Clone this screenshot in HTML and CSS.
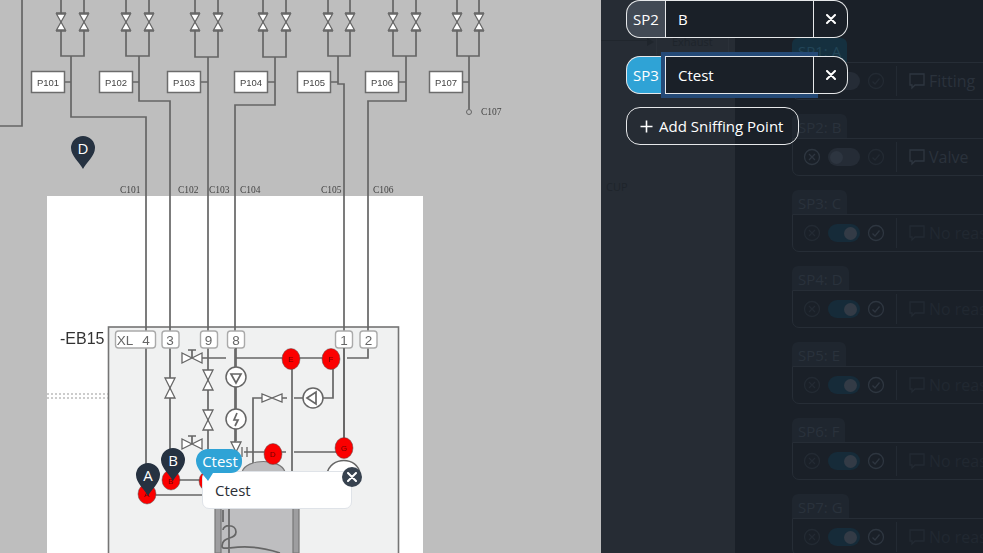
FILE: index.html
```html
<!DOCTYPE html>
<html lang="en">
<head>
<meta charset="utf-8">
<title>Sniffing points</title>
<link rel="stylesheet" href="styles.css">
</head>
<body>
<div class="screen">
  <main class="canvas">
    <svg class="diagram" width="601" height="553" viewBox="0 0 601 553">
      <defs>
        <filter id="soft" x="0" y="0" width="100%" height="100%"><feGaussianBlur stdDeviation="0.7"/></filter>
        <g id="valve"><path class="v" d="M-4.500 -8H4.500L-4.500 8H4.500Z"/><path class="ln" d="M-5 -9H5M-5 9H5"/></g>
        <g id="vvalve"><path class="v" d="M-5 -10H5L-5 10H5Z"/></g>
        <g id="hvalve"><path class="v" d="M-10 -5V5L10 -5V5Z"/><path class="ln" d="M0 0V-8M-4 -8H4"/></g>
      </defs>
      <g filter="url(#soft)">
        <rect class="sheet" x="47" y="196" width="376" height="357"/>
        <rect class="unit" x="108.500" y="327" width="290" height="230"/>
        <path class="dash" d="M47 394H108M47 398H108"/>
        <path class="ln" d="M22 0V126H0"/>
        <g class="pipes">
          <path d="M61 0V56H84V0M71 56V117H146V496"/>
          <path d="M126 0V56H149V0M139 56V101H170V480"/>
          <path d="M195 0V57H218V0M208 57V480"/>
          <path d="M263 0V57H286V0M275 57V105H235V450"/>
          <path d="M328 0V56H350V0M338 56V84H344V445"/>
          <path d="M393 0V56H416V0M406 56V101H368V358H347"/>
          <path d="M457 0V56H479V0M469 56V109"/>
          <path d="M65 82H71M132 82H139M200 82H208M268 82H275M331 82H338M399 82H406M463 82H469"/>
        </g>
        <circle class="port" cx="469" cy="112" r="2.500"/>
        <use href="#valve" x="61" y="22"/><use href="#valve" x="84" y="22"/>
        <use href="#valve" x="126" y="22"/><use href="#valve" x="149" y="22"/>
        <use href="#valve" x="195" y="22"/><use href="#valve" x="218" y="22"/>
        <use href="#valve" x="263" y="22"/><use href="#valve" x="286" y="22"/>
        <use href="#valve" x="328" y="22"/><use href="#valve" x="350" y="22"/>
        <use href="#valve" x="393" y="22"/><use href="#valve" x="416" y="22"/>
        <use href="#valve" x="457" y="22"/><use href="#valve" x="479" y="22"/>
        <g class="pbox">
          <rect x="31.500" y="71.500" width="33" height="21"/><rect x="99.500" y="71.500" width="33" height="21"/>
          <rect x="167.500" y="71.500" width="33" height="21"/><rect x="234.500" y="71.500" width="33" height="21"/>
          <rect x="297.500" y="71.500" width="33" height="21"/><rect x="365.500" y="71.500" width="33" height="21"/>
          <rect x="429.500" y="71.500" width="33" height="21"/>
        </g>
        <g class="plabel">
          <text x="48" y="85.500">P101</text><text x="116" y="85.500">P102</text><text x="184" y="85.500">P103</text>
          <text x="251" y="85.500">P104</text><text x="314" y="85.500">P105</text><text x="382" y="85.500">P106</text>
          <text x="446" y="85.500">P107</text>
        </g>
        <g class="clabel">
          <text x="120" y="193">C101</text><text x="178" y="193">C102</text><text x="209" y="193">C103</text>
          <text x="240" y="193">C104</text><text x="321" y="193">C105</text><text x="373" y="193">C106</text>
          <text x="481" y="115">C107</text>
        </g>
        <text class="eb" x="60" y="344">-EB15</text>
        <g class="tag">
          <rect x="115.500" y="331" width="40" height="17"/><rect x="162" y="331" width="17" height="17"/>
          <rect x="200.500" y="331" width="17" height="17"/><rect x="227.500" y="331" width="17" height="17"/>
          <rect x="335.500" y="331" width="17" height="17"/><rect x="360" y="331" width="17" height="17"/>
        </g>
        <g class="tagtext">
          <text x="125" y="345">XL</text><text x="146" y="345">4</text><text x="170" y="345">3</text>
          <text x="208.500" y="345">9</text><text x="236" y="345">8</text><text x="344" y="345">1</text><text x="368.500" y="345">2</text>
        </g>
        <g class="pipes">
          <path d="M200 358H226M236 358H330M333 360V398H322M292 358V553M344 348V452"/>
          <path d="M253 470V398H262M282 398H287M294 398H304"/>
          <path d="M236 348V367M236 387V409M236 429V441"/>
          <path d="M244 452H286M294 452H344"/>
          <path d="M146 495H215M170 480H205"/>
        </g>
        <use href="#vvalve" x="170" y="388"/><use href="#vvalve" x="208" y="380"/><use href="#vvalve" x="208" y="420"/>
        <use href="#hvalve" x="192" y="358"/><use href="#hvalve" x="192" y="444"/>
        <path class="v" d="M262 394V402L282 394V402Z"/>
        <g class="disc">
          <circle cx="236" cy="377" r="10"/><circle cx="236" cy="419" r="10"/><circle cx="313" cy="398" r="10"/>
        </g>
        <path class="ln" d="M231 374H241L236 383ZM237 413L234 420H238L235 426M307 398L316 392V404Z"/>
        <path class="v" d="M231 442H241L236 452ZM242 447V457M247 447V457"/>
        <path class="dome" d="M242 472C246 458 281 458 285 472Z"/>
        <path class="tank" d="M215 553V505H299V553Z"/>
        <path class="tankin" d="M221 553V505H293V553"/>
        <path class="ln" d="M229 505V553M223 510V522M223 530C223 524 236 524 236 532C236 540 222 536 222 546C222 553 240 540 280 553"/>
        <path class="disc" d="M327 474C330 456 358 456 360 474Z"/>
        <g class="red">
          <ellipse cx="147" cy="494" rx="9" ry="10"/><ellipse cx="171" cy="480" rx="9" ry="10"/><ellipse cx="208" cy="481" rx="9" ry="10"/>
          <ellipse cx="273" cy="454" rx="9" ry="10.500"/><ellipse cx="291" cy="359" rx="9" ry="10.500"/>
          <ellipse cx="331" cy="359" rx="9" ry="10.500"/><ellipse cx="344" cy="448" rx="9" ry="10.500"/>
        </g>
        <g class="redtext">
          <text x="147" y="497">A</text><text x="171" y="484">B</text><text x="291" y="362">E</text>
          <text x="331" y="362">F</text><text x="273" y="457">D</text><text x="344" y="451">G</text>
        </g>
      </g>
    </svg>

    <div class="pin pin-d">D</div>
    <div class="pin pin-a">A</div>
    <div class="pin pin-b">B</div>

    <div class="note">
      <span class="note-text">Ctest</span>
      <button class="note-close" type="button">
        <svg width="10" height="10" viewBox="0 0 10 10"><path d="M1 1L9 9M9 1L1 9"/></svg>
      </button>
    </div>
    <div class="pin pin-active">Ctest</div>
  </main>

  <aside class="panel">
    <div class="bg-list">
      <div class="bg-side">
        <div class="bg-rule"></div>
        <div class="bg-arrow"></div>
        <div class="bg-exhaust">Exhaust</div>
        <div class="bg-cup">CUP</div>
      </div>
      <div class="bg-main">
        <div class="bg-item">
          <div class="bg-tab bg-tab-on">SP1: A</div>
          <div class="bg-row">
            <svg class="bg-ic" viewBox="0 0 18 18"><circle cx="9" cy="9" r="7.500"/><path d="M6 6L12 12M12 6L6 12"/></svg>
            <span class="bg-toggle"><i></i></span>
            <svg class="bg-ic bg-dim" viewBox="0 0 18 18"><circle cx="9" cy="9" r="7.500"/><path d="M5.500 9.500L8 12L12.500 6.500"/></svg>
            <span class="bg-div"></span>
            <svg class="bg-ic" viewBox="0 0 18 18"><path d="M2 2H16V13H7L4 16V13H2Z"/></svg>
            <span class="bg-reason">Fitting</span>
          </div>
        </div>
        <div class="bg-item">
          <div class="bg-tab">SP2: B</div>
          <div class="bg-row">
            <svg class="bg-ic" viewBox="0 0 18 18"><circle cx="9" cy="9" r="7.500"/><path d="M6 6L12 12M12 6L6 12"/></svg>
            <span class="bg-toggle"><i></i></span>
            <svg class="bg-ic bg-dim" viewBox="0 0 18 18"><circle cx="9" cy="9" r="7.500"/><path d="M5.500 9.500L8 12L12.500 6.500"/></svg>
            <span class="bg-div"></span>
            <svg class="bg-ic" viewBox="0 0 18 18"><path d="M2 2H16V13H7L4 16V13H2Z"/></svg>
            <span class="bg-reason">Valve</span>
          </div>
        </div>
        <div class="bg-item">
          <div class="bg-tab">SP3: C</div>
          <div class="bg-row">
            <svg class="bg-ic bg-dim" viewBox="0 0 18 18"><circle cx="9" cy="9" r="7.500"/><path d="M6 6L12 12M12 6L6 12"/></svg>
            <span class="bg-toggle bg-toggle-on"><i></i></span>
            <svg class="bg-ic" viewBox="0 0 18 18"><circle cx="9" cy="9" r="7.500"/><path d="M5.500 9.500L8 12L12.500 6.500"/></svg>
            <span class="bg-div"></span>
            <svg class="bg-ic bg-dim" viewBox="0 0 18 18"><path d="M2 2H16V13H7L4 16V13H2Z"/></svg>
            <span class="bg-reason bg-dim-text">No reason</span>
          </div>
        </div>
        <div class="bg-item">
          <div class="bg-tab">SP4: D</div>
          <div class="bg-row">
            <svg class="bg-ic bg-dim" viewBox="0 0 18 18"><circle cx="9" cy="9" r="7.500"/><path d="M6 6L12 12M12 6L6 12"/></svg>
            <span class="bg-toggle bg-toggle-on"><i></i></span>
            <svg class="bg-ic" viewBox="0 0 18 18"><circle cx="9" cy="9" r="7.500"/><path d="M5.500 9.500L8 12L12.500 6.500"/></svg>
            <span class="bg-div"></span>
            <svg class="bg-ic bg-dim" viewBox="0 0 18 18"><path d="M2 2H16V13H7L4 16V13H2Z"/></svg>
            <span class="bg-reason bg-dim-text">No reason</span>
          </div>
        </div>
        <div class="bg-item">
          <div class="bg-tab">SP5: E</div>
          <div class="bg-row">
            <svg class="bg-ic bg-dim" viewBox="0 0 18 18"><circle cx="9" cy="9" r="7.500"/><path d="M6 6L12 12M12 6L6 12"/></svg>
            <span class="bg-toggle bg-toggle-on"><i></i></span>
            <svg class="bg-ic" viewBox="0 0 18 18"><circle cx="9" cy="9" r="7.500"/><path d="M5.500 9.500L8 12L12.500 6.500"/></svg>
            <span class="bg-div"></span>
            <svg class="bg-ic bg-dim" viewBox="0 0 18 18"><path d="M2 2H16V13H7L4 16V13H2Z"/></svg>
            <span class="bg-reason bg-dim-text">No reason</span>
          </div>
        </div>
        <div class="bg-item">
          <div class="bg-tab">SP6: F</div>
          <div class="bg-row">
            <svg class="bg-ic bg-dim" viewBox="0 0 18 18"><circle cx="9" cy="9" r="7.500"/><path d="M6 6L12 12M12 6L6 12"/></svg>
            <span class="bg-toggle bg-toggle-on"><i></i></span>
            <svg class="bg-ic" viewBox="0 0 18 18"><circle cx="9" cy="9" r="7.500"/><path d="M5.500 9.500L8 12L12.500 6.500"/></svg>
            <span class="bg-div"></span>
            <svg class="bg-ic bg-dim" viewBox="0 0 18 18"><path d="M2 2H16V13H7L4 16V13H2Z"/></svg>
            <span class="bg-reason bg-dim-text">No reason</span>
          </div>
        </div>
        <div class="bg-item">
          <div class="bg-tab">SP7: G</div>
          <div class="bg-row">
            <svg class="bg-ic bg-dim" viewBox="0 0 18 18"><circle cx="9" cy="9" r="7.500"/><path d="M6 6L12 12M12 6L6 12"/></svg>
            <span class="bg-toggle bg-toggle-on"><i></i></span>
            <svg class="bg-ic" viewBox="0 0 18 18"><circle cx="9" cy="9" r="7.500"/><path d="M5.500 9.500L8 12L12.500 6.500"/></svg>
            <span class="bg-div"></span>
            <svg class="bg-ic bg-dim" viewBox="0 0 18 18"><path d="M2 2H16V13H7L4 16V13H2Z"/></svg>
            <span class="bg-reason bg-dim-text">No reason</span>
          </div>
        </div>
      </div>
    </div>

    <div class="editor">
      <div class="sp-field">
        <span class="sp-label">SP2</span>
        <span class="sp-input">B</span>
        <button class="sp-close" type="button"><svg width="10" height="10" viewBox="0 0 10 10"><path d="M1 1L9 9M9 1L1 9"/></svg></button>
      </div>
      <div class="sp-field sp-field-active">
        <span class="sp-label">SP3</span>
        <span class="sp-input">Ctest</span>
        <button class="sp-close" type="button"><svg width="10" height="10" viewBox="0 0 10 10"><path d="M1 1L9 9M9 1L1 9"/></svg></button>
      </div>
      <button class="add-btn" type="button">
        <svg width="13" height="13" viewBox="0 0 13 13"><path d="M6.500 0.500V12.500M0.500 6.500H12.500"/></svg>
        <span>Add Sniffing Point</span>
      </button>
    </div>
  </aside>
</div>
</body>
</html>
```

FILE: styles.css
```css
* { box-sizing: border-box; }
html, body { margin: 0; height: 100%; overflow: hidden; }
body { font-family: "Open Sans", sans-serif; background: #1a2028; }
.screen { display: flex; width: 983px; height: 553px; overflow: hidden; }

/* diagram canvas */
.canvas { position: relative; width: 601px; height: 553px; background: #bebebe; flex: none; overflow: hidden; }
.diagram { display: block; }
.sheet { fill: #fff; }
.unit { fill: #f0f1f1; stroke: #747474; stroke-width: 1.600; }
.dash { fill: none; stroke: #999; stroke-width: 1.200; stroke-dasharray: 2 2; }
.pipes path, .ln { fill: none; stroke: #666; stroke-width: 1.700; }
.v { fill: #fff; stroke: #666; stroke-width: 1.300; }
.port { fill: none; stroke: #666; }
.pbox rect { fill: #fff; stroke: #6c6c6c; stroke-width: 1.500; }
.plabel text { font: 9.500px "Liberation Sans", sans-serif; fill: #444; text-anchor: middle; }
.clabel text { font: 9.500px "Liberation Serif", serif; fill: #444; text-anchor: start; }
.eb { font: 16px "Liberation Sans", sans-serif; fill: #333; }
.tag rect { fill: #fff; stroke: #aaa; stroke-width: 1.400; rx: 3px; }
.tagtext text { font: 13.500px "Liberation Sans", sans-serif; fill: #666; text-anchor: middle; }
.disc circle, path.disc { fill: #fff; stroke: #666; stroke-width: 1.500; }
.dome { fill: #bcbcbe; stroke: #777; stroke-width: 1.200; }
.tank { fill: #9e9ea0; stroke: #777; stroke-width: 1.200; }
.tankin { fill: #bebec0; stroke: #777; stroke-width: 1.200; }
.red ellipse { fill: #fb0000; stroke: #555; stroke-width: 0.500; }
.redtext text { font: 8px "Liberation Sans", sans-serif; fill: #6a0000; text-anchor: middle; }

/* pins */
.pin {
  position: absolute; width: 24px; height: 33px; padding-bottom: 9px;
  display: flex; align-items: center; justify-content: center;
  color: #fff; font-size: 15px; line-height: 1;
  background: #263241;
  clip-path: path("M12 0A12 12 0 0 1 24 12C24 20 15 27 12 33C9 27 0 20 0 12A12 12 0 0 1 12 0Z");
}
.pin-d { left: 71px; top: 136px; }
.pin-a { left: 136px; top: 463px; }
.pin-b { left: 161px; top: 448px; }
.pin-active {
  left: 196px; top: 449px; width: 46px; height: 33px; background: #2fa3d6; padding-left: 2px;
  clip-path: path("M12 0H35A11 11 0 0 1 46 11V13A11 11 0 0 1 35 24H17L12 32C9 27 0 20 0 12A12 12 0 0 1 12 0Z");
}

/* note popup */
.note {
  position: absolute; left: 202px; top: 471px; width: 150px; height: 38px;
  background: #fff; border: 1px solid #dfe3e8; border-radius: 7px;
  display: flex; align-items: center; padding-left: 12px;
}
.note-text { font-size: 15px; color: #2b2f36; }
.note-close {
  position: absolute; left: 139px; top: -5px; width: 20px; height: 20px; padding: 0;
  border: 0; border-radius: 50%; background: #37424f;
  display: flex; align-items: center; justify-content: center;
}
.note-close path, .sp-close path { fill: none; stroke: #fff; stroke-width: 2; stroke-linecap: round; }

/* right panel */
.panel { position: relative; flex: 1; height: 553px; overflow: hidden; background: #1a2028; }
.bg-list { display: flex; height: 100%; }
.bg-side { width: 134px; height: 100%; background: #262c34; position: relative; flex: none; }
.bg-rule { position: absolute; left: 0; top: 40px; width: 48px; height: 1px; background: #20262d; }
.bg-arrow {
  position: absolute; left: 46px; top: 38px; width: 0; height: 0;
  border-top: 4px solid transparent; border-bottom: 4px solid transparent; border-left: 7px solid #1f252c;
}
.bg-exhaust {
  position: absolute; left: 55px; top: 27px; width: 73px; height: 28px;
  border: 1px solid #2b3139; border-bottom: 0; font-size: 11px; color: #1e242b; padding: 6px 0 0 15px;
}
.bg-cup { position: absolute; left: 5px; top: 179px; font-size: 11px; color: #1e242b; }
.bg-main { flex: 1; padding: 38px 0 0 57px; }
.bg-item { height: 76px; }
.bg-tab {
  display: inline-block; height: 24px; padding: 0 6px; background: #1f262f;
  border-radius: 6px 6px 0 0; font-size: 15px; line-height: 26px; color: #2a323c; vertical-align: top;
}
.bg-tab-on { background: #15303f; color: #224557; }
.bg-row {
  display: flex; align-items: center; width: 300px; height: 38px; padding-left: 10px;
  border: 1px solid #262d36; border-radius: 0 0 0 7px;
}
.bg-ic { width: 18px; height: 18px; flex: none; fill: none; stroke: #2e3640; stroke-width: 1.300; }
.bg-dim { stroke: #232a33; }
.bg-toggle { display: flex; align-items: center; width: 32px; height: 18px; margin: 0 7px; padding: 0 2px; border-radius: 9px; background: #252c36; flex: none; }
.bg-toggle i { width: 13px; height: 13px; border-radius: 50%; background: #2d3540; }
.bg-toggle-on { background: #162b39; justify-content: flex-end; padding-right: 3px; }
.bg-toggle-on i { background: #333b46; }
.bg-div { width: 1px; height: 30px; margin: 0 11px; background: #232a33; flex: none; }
.bg-reason { margin-left: 3px; font-size: 16px; color: #2a323c; white-space: nowrap; }
.bg-dim-text { color: #212831; }

/* foreground editor */
.editor { position: absolute; left: 25px; top: 0; display: flex; flex-direction: column; align-items: flex-start; }
.sp-field { display: flex; width: 222px; height: 38px; color: #fff; font-size: 15px; margin-bottom: 18px; }
.sp-label {
  width: 39px; flex: none; display: flex; align-items: center; justify-content: center;
  background: #424a55; border: 1px solid #e6e8ea; border-right: 0; border-radius: 14px 0 0 14px;
}
.sp-input {
  flex: 1; display: flex; align-items: center; padding-left: 12px;
  background: #1a2028; border: 1px solid #e6e8ea;
}
.sp-close {
  width: 34px; flex: none; padding: 0; background: transparent;
  border: 1px solid #e6e8ea; border-left: 0; border-radius: 0 14px 14px 0;
  display: flex; align-items: center; justify-content: center;
}
.sp-field-active .sp-label { background: #2fa3d6; }
.sp-field-active .sp-input { outline: 4px solid #254a77; }
.sp-field-active .sp-close { background: #1a2028; }
.add-btn {
  display: flex; align-items: center; gap: 6px; width: 173px; height: 38px; padding: 0 0 0 13px; margin-top: -5px;
  background: transparent; border: 1px solid #e6e8ea; border-radius: 14px;
  color: #fff; font: 15px "Open Sans", sans-serif;
}
.add-btn path { fill: none; stroke: #fff; stroke-width: 1.600; }
```
